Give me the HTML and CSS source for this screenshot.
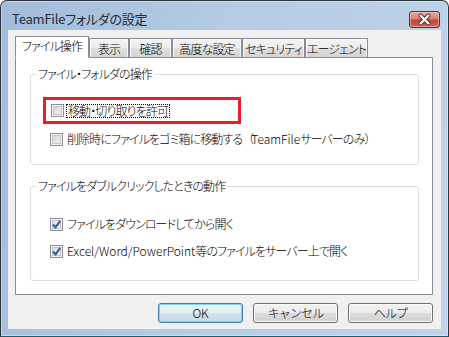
FILE: index.html
```html
<!DOCTYPE html>
<html lang="ja">
<head>
<meta charset="utf-8">
<title>TeamFileフォルダの設定</title>
<link rel="stylesheet" href="styles.css">
</head>
<body>
<div class="window">
  <div class="titlebar">
    <span class="title">TeamFileフォルダの設定</span>
    <button class="close" aria-label="閉じる">
      <svg width="29" height="15" viewBox="0 0 29 15">
        <path d="M10.5 3.5 L18.5 11.5 M18.5 3.5 L10.5 11.5" stroke="#5a2b2b" stroke-width="4.2" stroke-linecap="round" fill="none"/>
        <path d="M10.5 3.5 L18.5 11.5 M18.5 3.5 L10.5 11.5" stroke="#ffffff" stroke-width="2.2" stroke-linecap="round" fill="none"/>
      </svg>
    </button>
  </div>
  <div class="client">
    <div class="tabs">
      <div class="tab t1 active">ファイル操作</div>
      <div class="tab t2">表示</div>
      <div class="tab t3">確認</div>
      <div class="tab t4">高度な設定</div>
      <div class="tab t5">セキュリティ</div>
      <div class="tab t6">エージェント</div>
    </div>
    <div class="panel">
      <fieldset class="group g1">
        <legend>ファイル・フォルダの操作</legend>
        <div class="highlight">
          <label class="row"><span class="cb"></span><span class="text focus">移動・切り取りを許可</span></label>
        </div>
        <label class="row r2"><span class="cb"></span><span class="text">削除時にファイルをゴミ箱に移動する<span class="fw">（</span><span class="latin">TeamFile</span>サーバーのみ<span class="fw">）</span></span></label>
      </fieldset>
      <fieldset class="group g2">
        <legend>ファイルをダブルクリックしたときの動作</legend>
        <label class="row r3"><span class="cb checked"><svg width="11" height="11" viewBox="0 0 11 11"><path d="M2 5.5 L4.6 8.3 L9.2 1.8" stroke="#3b5aa3" stroke-width="2.1" fill="none"/></svg></span><span class="text">ファイルをダウンロードしてから開く</span></label>
        <label class="row r4"><span class="cb checked"><svg width="11" height="11" viewBox="0 0 11 11"><path d="M2 5.5 L4.6 8.3 L9.2 1.8" stroke="#3b5aa3" stroke-width="2.1" fill="none"/></svg></span><span class="text"><span class="latin">Excel/Word/PowerPoint</span>等のファイルをサーバー上で開く</span></label>
      </fieldset>
    </div>
    <div class="buttons">
      <button class="btn default"><span class="latin">OK</span></button>
      <button class="btn">キャンセル</button>
      <button class="btn">ヘルプ</button>
    </div>
  </div>
</div>
</body>
</html>
```

FILE: styles.css
```css
* { box-sizing: border-box; }
html, body { margin: 0; padding: 0; }
body {
  width: 449px;
  height: 337px;
  overflow: hidden;
  background: #ffffff;
  font-family: "Noto Sans CJK JP", "Noto Sans", sans-serif;
  font-size: 12px;
  font-weight: 300;
  color: #000;
  font-feature-settings: "palt";
}
.window {
  width: 449px;
  height: 337px;
  border: 1px solid #2b3540;
  border-bottom-color: #1d5e70;
  border-radius: 7px 7px 0 0;
  background: linear-gradient(100deg, #a3bcd9 0%, #b5cbe4 45%, #bfd4ea 100%);
  padding: 0 7px 7px 7px;
  display: flex;
  flex-direction: column;
  box-shadow: inset 0 0 0 1px rgba(255,255,255,0.35);
}
.titlebar {
  height: 29px;
  display: flex;
  justify-content: space-between;
  align-items: center;
  padding: 6px 1px 0 4px;
}
.title {
  font-size: 13px;
  font-weight: 400;
  color: #1e2b3a;
  line-height: 16px;
  letter-spacing: -0.2px;
}
.close {
  width: 31px;
  height: 17px;
  margin-top: 2px;
  padding: 0;
  border: 1px solid #6e2626;
  border-radius: 3px;
  background: linear-gradient(to bottom, #e7a99d 0%, #d88474 45%, #c24a37 52%, #c8533f 80%, #d47260 100%);
  box-shadow: inset 0 0 0 1px rgba(255,220,210,0.45);
  display: flex;
  align-items: center;
  justify-content: center;
}
.close svg { display: block; }
.client {
  flex: 1;
  background: #f0f0f0;
  padding: 6px 8px 0 7px;
  display: flex;
  flex-direction: column;
  letter-spacing: -0.9px;
}
.latin { letter-spacing: 0; }
.fw { font-feature-settings: normal; letter-spacing: -3px; }
.tabs {
  height: 22px;
  display: flex;
  align-items: flex-end;
  margin-bottom: -1px;
  position: relative;
  z-index: 1;
}
.tab {
  height: 20px;
  border: 1px solid #898c95;
  background: linear-gradient(to bottom, #f4f4f4 0%, #ececec 50%, #dfdfdf 50%, #d4d4d4 100%);
  box-shadow: inset 1px 1px 0 #fbfbfb, inset -1px 0 0 #f8f8f8;
  display: flex;
  align-items: center;
  justify-content: center;
  padding-top: 1px;
  white-space: nowrap;
  line-height: 14px;
}
.tab.active {
  height: 22px;
  background: #ffffff;
  box-shadow: none;
  border-bottom: 1px solid #ffffff;
  padding: 0 0 2px 0;
}
.t1 { width: 74px; }
.t2 { width: 40px; }
.t3 { width: 43px; }
.t4 { width: 70px; }
.t5 { width: 63px; }
.t6 { width: 63px; }
.panel {
  width: 418px;
  height: 238px;
  background: #ffffff;
  border: 1px solid #898c95;
  padding: 9px 13px 0 14px;
  display: flex;
  flex-direction: column;
}
.group {
  margin: 0;
  border: 1px solid #d5dfe5;
  border-radius: 3px;
  padding: 0 0 0 5px;
  min-width: 0;
}
.group legend {
  padding: 0 2px;
  line-height: 14px;
  height: 14px;
}
.g1 { padding-top: 16px; padding-bottom: 17px; }
.g2 { margin-top: 14px; padding-top: 23px; padding-bottom: 21px; }
.row {
  display: flex;
  align-items: center;
  height: 16px;
  margin-left: 14px;
  white-space: nowrap;
}
.highlight {
  width: 198px;
  height: 27px;
  border: 3px solid #e3202a;
  margin-left: 7px;
  padding: 2px 0 0 5px;
}
.highlight .row { margin-left: 0; height: 17px; }
.r2 { margin-top: 7px; }
.r4 { margin-top: 11px; }
.cb {
  width: 13px;
  height: 13px;
  flex: none;
  border: 1px solid #8e8f8f;
  background: linear-gradient(135deg, #c9ccd1 0%, #e4e6e8 55%, #f6f6f6 100%);
  box-shadow: inset 0 0 0 1px #f3f3f3, inset 0 0 0 2px #c2c5c9;
  display: flex;
  align-items: center;
  justify-content: center;
}
.cb.checked {
  background: linear-gradient(135deg, #d3d6da 0%, #eceef0 55%, #f8f8f8 100%);
}
.cb svg { display: block; }
.text {
  margin-left: 2px;
  padding: 0 1px;
  border: 1px dotted transparent;
  line-height: 12px;
  height: 14px;
}
.text.focus { border-color: #000; }
.buttons {
  display: flex;
  justify-content: flex-end;
  gap: 10px;
  margin-top: 8px;
}
.btn {
  width: 85px;
  height: 20px;
  padding: 0;
  font-family: inherit;
  font-size: 12px;
  font-weight: 300;
  letter-spacing: -0.9px;
  color: #000;
  line-height: 14px;
  border: 1px solid #707070;
  border-radius: 3px;
  background: linear-gradient(to bottom, #f2f2f2 0%, #ebebeb 50%, #dddddd 50%, #cfcfcf 100%);
  box-shadow: inset 0 0 0 1px #fbfbfb;
}
.btn.default {
  border-color: #3c7fb1;
  background: linear-gradient(to bottom, #eaf3f9 0%, #e1ecf4 50%, #d3e2ec 50%, #c8d9e5 100%);
  box-shadow: inset 0 0 0 1px #7fd3f5;
}
```
